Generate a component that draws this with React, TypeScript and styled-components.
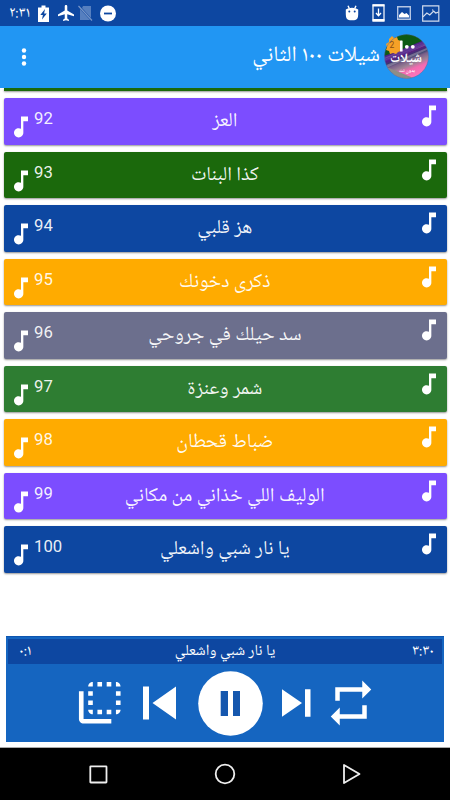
import React from 'react';
import styled, { createGlobalStyle } from 'styled-components';

const GlobalStyle = createGlobalStyle`
  * { box-sizing: border-box; }
  body { margin: 0; background: #fff; }
  svg { display: block; flex: none; }
`;

const arabic = `'Noto Naskh Arabic UI', 'Noto Sans Arabic', 'Roboto', 'DejaVu Sans', sans-serif`;

const Screen = styled.div`
  width: 450px;
  height: 800px;
  display: flex;
  flex-direction: column;
  overflow: hidden;
  background: #fff;
  color: #fff;
  font-family: ${arabic};
`;

const StatusBar = styled.header`
  height: 26px;
  flex: none;
  display: flex;
  align-items: center;
  padding: 0 10.5px 0 9px;
  background: #0d47a1;
`;

const Clock = styled.span`
  width: 29px;
  margin-bottom: 1px;
  font-size: 15px;
  line-height: 24px;
  white-space: nowrap;
`;

const StatusIcon = styled.svg<{ $gap: number }>`
  margin-left: ${(p) => p.$gap}px;
`;

const Spacer = styled.div`
  flex: 1;
`;

const Toolbar = styled.div`
  height: 61.5px;
  flex: none;
  display: flex;
  align-items: center;
  padding: 0 21px 0 21px;
  background: #2196f3;
`;

const Title = styled.h1`
  flex: 1;
  margin: 0 4px 3px 0;
  direction: rtl;
  font-size: 22px;
  font-weight: 400;
  line-height: 30px;
  white-space: nowrap;
`;

const List = styled.main`
  height: 548.5px;
  flex: none;
  display: flex;
  flex-direction: column;
  gap: 7px;
  padding: 0 3.5px 0 4px;
  overflow: hidden;
`;

const PeekRow = styled.div`
  height: 3.5px;
  flex: none;
  background: #1b690c;
  box-shadow: 0 1px 2px rgba(0, 0, 0, 0.4);
`;

const Row = styled.div<{ $color: string }>`
  height: 46.5px;
  flex: none;
  display: flex;
  align-items: flex-start;
  padding: 0 3.5px 0 2.7px;
  border-radius: 2px;
  background: ${(p) => p.$color};
  box-shadow: 0 1px 2px rgba(0, 0, 0, 0.42);
`;

const RowSide = styled.div<{ $top: number; $end?: boolean }>`
  width: 80px;
  display: flex;
  justify-content: ${(p) => (p.$end ? 'flex-end' : 'flex-start')};
  padding-top: ${(p) => p.$top}px;
`;

const RowNumber = styled.span`
  margin: -4px 0 0 -0.7px;
  font: 400 16.7px/20px Roboto, sans-serif;
  color: rgba(255, 255, 255, 0.92);
`;

const RowTitle = styled.div`
  flex: 1;
  direction: rtl;
  text-align: center;
  font-size: 19.9px;
  line-height: 47px;
  white-space: nowrap;
  color: rgba(255, 255, 255, 0.94);
`;

const Player = styled.section`
  width: 438px;
  height: 106px;
  flex: none;
  display: flex;
  flex-direction: column;
  margin-left: 6px;
  padding: 2px;
  background: #1565c0;
  border-top: 1px solid #0d55b0;
`;

const NowPlaying = styled.div`
  height: 25px;
  flex: none;
  display: flex;
  align-items: center;
  justify-content: space-between;
  padding: 0 8px 0 11px;
  background: #0d47a1;
  font-size: 15.4px;
  line-height: 22px;
`;

const PlayerTime = styled.span<{ $end?: boolean }>`
  width: 60px;
  margin-bottom: 2px;
  font-size: 15px;
  text-align: ${(p) => (p.$end ? 'right' : 'left')};
`;

const TrackName = styled.span`
  direction: rtl;
  margin-right: 3px;
  white-space: nowrap;
`;

const Controls = styled.div`
  flex: 1;
  display: flex;
  align-items: center;
  padding: 2px 0 0 63.5px;
`;

const Control = styled.svg<{ $gap: number }>`
  margin-left: ${(p) => p.$gap}px;
`;

const NavBar = styled.nav`
  height: 53px;
  flex: none;
  display: flex;
  align-items: center;
  justify-content: space-between;
  margin-top: auto;
  padding: 0 89px 0 88px;
  background: #000;
  border-top: 1px solid #aaa;
`;

const NoteIcon = () => (
  <svg width="28" height="28" viewBox="0 0 24 24" fill="#fff">
    <path d="M12 3v10.55c-.59-.34-1.27-.55-2-.55-2.21 0-4 1.79-4 4s1.79 4 4 4 4-1.79 4-4V7h4V3h-6z" />
  </svg>
);

const songs = [
  { n: 92, title: 'العز', color: '#7c4dff' },
  { n: 93, title: 'كذا البنات', color: '#1b690c' },
  { n: 94, title: 'هز قلبي', color: '#0d47a1' },
  { n: 95, title: 'ذكرى دخونك', color: '#ffab00' },
  { n: 96, title: 'سد حيلك في جروحي', color: '#6c6f8d' },
  { n: 97, title: 'شمر وعنزة', color: '#2e7d32' },
  { n: 98, title: 'ضباط قحطان', color: '#ffab00' },
  { n: 99, title: 'الوليف اللي خذاني من مكاني', color: '#7c4dff' },
  { n: 100, title: 'يا نار شبي واشعلي', color: '#0d47a1' },
];

const AlbumArt = () => (
  <svg width="45" height="45" viewBox="0 0 45 45">
    <defs>
      <clipPath id="disc"><circle cx="22.5" cy="22.5" r="22" /></clipPath>
      <linearGradient id="stripes" x1="0.25" y1="0" x2="0.65" y2="1">
        <stop offset="0" stopColor="#07550f" />
        <stop offset="0.24" stopColor="#125b25" />
        <stop offset="0.28" stopColor="#333069" />
        <stop offset="0.36" stopColor="#51208a" />
        <stop offset="0.42" stopColor="#a68cb0" />
        <stop offset="0.46" stopColor="#5b1f80" />
        <stop offset="0.54" stopColor="#2f4068" />
        <stop offset="0.6" stopColor="#7a5f88" />
        <stop offset="0.7" stopColor="#9d8295" />
        <stop offset="0.8" stopColor="#f36ab0" />
        <stop offset="1" stopColor="#ff77bd" />
      </linearGradient>
    </defs>
    <g clipPath="url(#disc)">
      <rect width="45" height="45" fill="url(#stripes)" />
      <path d="M0 0H45V4L14 17 0 22Z" fill="#0d5a14" />
      <path d="M0 32 45 13v2L0 35Z" fill="#b7a0b9" opacity=".5" />
      <path d="M0 25 45 6v3L0 29Z" fill="#4a1d8c" opacity=".7" />
      <path d="M0 32 32 45H0Z" fill="#8f8e86" />
    </g>
    <path d="m8 2 2 2 3-1 1 3 3 1-1 3 2 2-2 2 1 3-3 1-2 2-3-1-3 1-1-3-3-1 1-3-1-3 3-2 0-3Z" fill="#f6a127" />
    <text x="8" y="13.5" textAnchor="middle" fontFamily="Roboto" fontSize="8.5" fill="#8b4c12">2</text>
    <rect x="16" y="6.5" width="2.6" height="11" rx=".6" fill="#fff" />
    <circle cx="22.8" cy="12.8" r="1.9" fill="#fff" />
    <circle cx="28.8" cy="12.8" r="1.9" fill="#fff" />
    <text x="22" y="30" textAnchor="middle" direction="rtl" fontFamily={arabic} fontWeight="700" fontSize="13" textLength="32" lengthAdjust="spacingAndGlyphs" fill="#fff">شيلات</text>
    <text x="23" y="38.5" textAnchor="middle" direction="rtl" fontFamily={arabic} fontWeight="700" fontSize="5" fill="#fff">بدون نت</text>
    <circle cx="22.5" cy="22.5" r="22" fill="none" stroke="#4c6fa5" strokeWidth=".5" />
  </svg>
);

export default function App() {
  return (
    <Screen>
      <GlobalStyle />
      <StatusBar>
        <Clock>٢:٣١</Clock>
        <StatusIcon $gap={0} width="11" height="17" viewBox="0 0 11 17">
          <path d="M3.5.5h4v2H11V17H0V2.5h3.5Z" fill="#fff" />
          <path d="M7 4 2.3 10h2.6L4 14.5 8.8 8.6H6.1Z" fill="#0d47a1" />
        </StatusIcon>
        <StatusIcon $gap={9} width="16" height="16" viewBox="2 2 19 20" preserveAspectRatio="none" fill="#fff">
          <path d="M21 16v-2l-8-5V3.5c0-.83-.67-1.5-1.5-1.5S10 2.67 10 3.5V9l-8 5v2l8-2.5V19l-2 1.5V22l3.5-1 3.5 1v-1.5L13 19v-5.5Z" />
        </StatusIcon>
        <StatusIcon $gap={3.5} width="15" height="16" viewBox="0 0 15 16">
          <path d="M5 1h8v12L4 3ZM2 4l10 11H2Z" fill="#6f91ca" opacity=".75" />
          <path d="m.5 1 13.5 14.5" stroke="#7796c8" strokeWidth="1.2" />
        </StatusIcon>
        <StatusIcon $gap={7.5} width="16" height="17" viewBox="0 0 16 17">
          <circle cx="8" cy="8.5" r="8" fill="#fff" />
          <path d="M4 8.5h8" stroke="#0d47a1" strokeWidth="1.8" />
        </StatusIcon>
        <Spacer />
        <StatusIcon $gap={0} width="14" height="16" viewBox="0 0 14 16">
          <path d="M.8 4.5Q3 2.8 7 2.8t6.2 1.7V9.5q0 5.7-4 5.7H4.8q-4 0-4-5.7Z" fill="#fff" />
          <path d="m3 .8 1.2 2.5m6.8-2.5-1.2 2.5" stroke="#fff" strokeWidth="1.4" />
          <circle cx="4.3" cy="6.5" r="1" fill="#0d47a1" /><circle cx="9.7" cy="6.5" r="1" fill="#0d47a1" />
        </StatusIcon>
        <StatusIcon $gap={13} width="13" height="18" viewBox="0 0 13 18" fill="none" stroke="#fff">
          <path d="M1 .8h11v16.4H1Z" strokeWidth="1.2" />
          <path d="M.6 1.5h11.8M.6 16h11.8" strokeWidth="2" />
          <path d="M6.5 4.5v7M4 9l2.5 2.8L9 9" strokeWidth="1.3" />
        </StatusIcon>
        <StatusIcon $gap={12.5} width="14" height="14" viewBox="0 0 14 14">
          <path d="M.7.7h12.6v12.6H.7Z" fill="none" stroke="#b4c5e3" strokeWidth="1.4" />
          <path d="M2 11.5V9l3-3 2.5 2 2-1 2.5 2.5v2Z" fill="#fff" />
        </StatusIcon>
        <StatusIcon $gap={11} width="17.5" height="17" viewBox="0 0 18 17" fill="none" stroke="#d3ddee">
          <path d="M.7.7h16.6v15.6H.7Z" strokeWidth="1.2" />
          <path d="m1 12 4-4 3 2 4-4 2 2 3-1" strokeWidth="1.3" />
          <path d="M11 4v2" strokeWidth=".8" />
        </StatusIcon>
      </StatusBar>

      <Toolbar>
        <svg width="6" height="20" viewBox="0 0 6 20" fill="#fff">
          <circle cx="3" cy="3.5" r="2.2" /><circle cx="3" cy="10" r="2.2" /><circle cx="3" cy="16.5" r="2.2" />
        </svg>
        <Title>شيلات ١٠٠ الثاني</Title>
        <AlbumArt />
      </Toolbar>

      <List>
        <PeekRow />
        {songs.map((s) => (
          <Row key={s.n} $color={s.color}>
            <RowSide $top={15.2}>
              <NoteIcon />
              <RowNumber>{s.n}</RowNumber>
            </RowSide>
            <RowTitle>{s.title}</RowTitle>
            <RowSide $top={4.2} $end><NoteIcon /></RowSide>
          </Row>
        ))}
      </List>

      <Player>
        <NowPlaying>
          <PlayerTime>٠:١</PlayerTime>
          <TrackName>يا نار شبي واشعلي</TrackName>
          <PlayerTime $end>٣:٣٠</PlayerTime>
        </NowPlaying>
        <Controls>
          <Control $gap={0} width="55.5" height="55.5" viewBox="0 0 24 24" fill="#fff">
            <path d="M9 7H7v2h2V7zm0 4H7v2h2v-2zm0-8c-1.11 0-2 .9-2 2h2V3zm4 12h-2v2h2v-2zm6-12v2h2c0-1.1-.9-2-2-2zm-6 0h-2v2h2V3zM9 17v-2H7c0 1.1.89 2 2 2zm10-4h2v-2h-2v2zm0-4h2V7h-2v2zm0 8c1.1 0 2-.9 2-2h-2v2zM5 7H3v12c0 1.1.9 2 2 2h12v-2H5V7zm10-2h2V3h-2v2zm0 12h2v-2h-2v2z" />
          </Control>
          <Control $gap={16} width="33" height="34" viewBox="0 0 33 34" fill="#fff">
            <path d="M0 .5h6v33H0ZM33 .5v33L9.5 17Z" />
          </Control>
          <Control $gap={22} width="65" height="65" viewBox="0 0 65 65">
            <circle cx="32.5" cy="32.5" r="32.3" fill="#fff" />
            <path d="M22.7 20h7.3v25h-7.3ZM35 20h7v25h-7Z" fill="#1557ae" />
          </Control>
          <Control $gap={19} width="28.5" height="28" viewBox="0 0 28.5 28" fill="#fff">
            <path d="M0 .3 20 14 0 27.7ZM23 .3h5.5v27.4H23Z" />
          </Control>
          <Control $gap={13} width="54" height="54" viewBox="0 0 24 24" fill="#fff">
            <path d="M7 7h10v3l4-4-4-4v3H5v6h2V7zm10 10H7v-3l-4 4 4 4v-3h12v-6h-2v4z" />
          </Control>
        </Controls>
      </Player>

      <NavBar>
        <svg width="20" height="20" viewBox="0 0 20 20" fill="none" stroke="#eee" strokeWidth="1.8">
          <rect x="2.3" y="2.3" width="16.2" height="16.2" rx=".5" />
        </svg>
        <svg width="22" height="22" viewBox="0 0 22 22" fill="none" stroke="#eee" strokeWidth="1.8">
          <circle cx="11" cy="11" r="9.3" />
        </svg>
        <svg width="19" height="22" viewBox="0 0 19 22" fill="none" stroke="#eee" strokeWidth="1.8" strokeLinejoin="round">
          <path d="M2 2v18l15.5-9Z" />
        </svg>
      </NavBar>
    </Screen>
  );
}
